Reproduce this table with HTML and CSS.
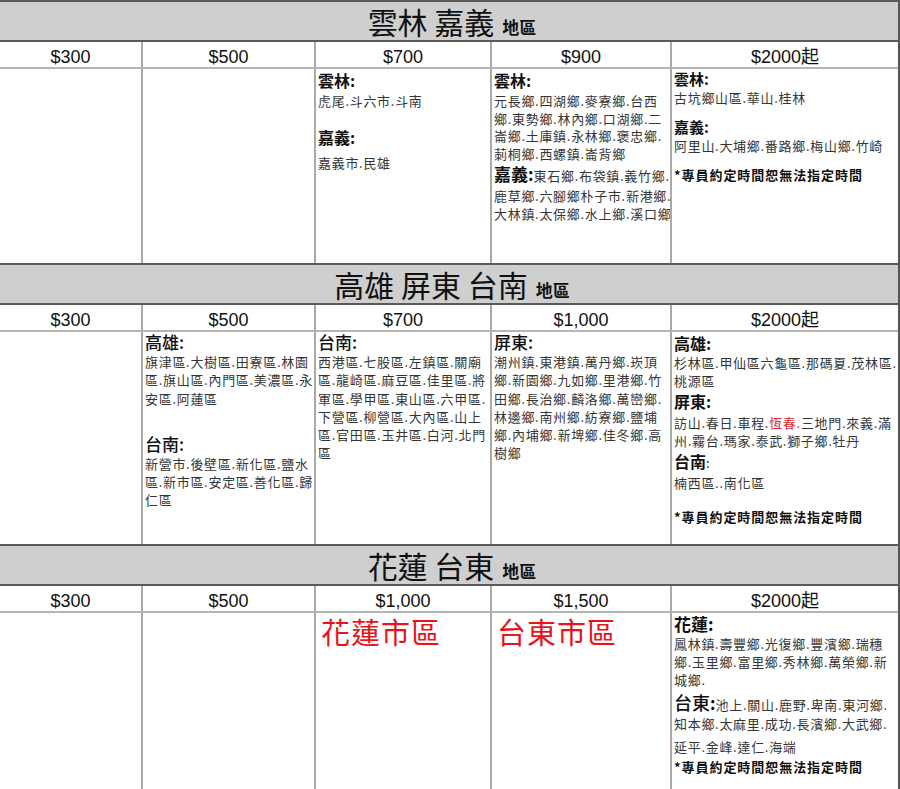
FILE: index.html
```html
<!DOCTYPE html>
<html lang="zh-Hant">
<head>
<meta charset="utf-8">
<title>運費表</title>
<link rel="stylesheet" href="styles.css">
</head>
<body>
<main class="sheet">
  <section class="region r1">
    <h2 class="region-title"><span class="name">雲林 嘉義</span><span class="suffix">地區</span></h2>
    <div class="row prices">
      <div class="c">$300</div><div class="c">$500</div><div class="c">$700</div><div class="c">$900</div><div class="c">$2000起</div>
    </div>
    <div class="row body">
      <div class="c"></div>
      <div class="c"></div>
      <div class="c r1c3">
        <div class="h">雲林:</div>
        <div class="t">虎尾.斗六市.斗南</div>
        <div class="h">嘉義:</div>
        <div class="t">嘉義市.民雄</div>
      </div>
      <div class="c r1c4">
        <div class="h">雲林:</div>
        <div class="t">元長鄉.四湖鄉.麥寮鄉.台西<br>鄉.東勢鄉.林內鄉.口湖鄉.二<br>崙鄉.土庫鎮.永林鄉.褒忠鄉.<br>莿桐鄉.西螺鎮.崙背鄉</div>
        <div class="t lead"><span class="ih">嘉義:</span>東石鄉.布袋鎮.義竹鄉.</div>
        <div class="t">鹿草鄉.六腳鄉朴子市.新港鄉.<br>大林鎮.太保鄉.水上鄉.溪口鄉</div>
      </div>
      <div class="c r1c5">
        <div class="h">雲林:</div>
        <div class="t">古坑鄉山區.華山.桂林</div>
        <div class="h">嘉義:</div>
        <div class="t">阿里山.大埔鄉.番路鄉.梅山鄉.竹崎</div>
        <div class="note">*專員約定時間恕無法指定時間</div>
      </div>
    </div>
  </section>

  <section class="region r2">
    <h2 class="region-title"><span class="name">高雄 屏東 台南</span><span class="suffix">地區</span></h2>
    <div class="row prices">
      <div class="c">$300</div><div class="c">$500</div><div class="c">$700</div><div class="c">$1,000</div><div class="c">$2000起</div>
    </div>
    <div class="row body">
      <div class="c"></div>
      <div class="c r2c2">
        <div class="h">高雄:</div>
        <div class="t">旗津區.大樹區.田寮區.林園<br>區.旗山區.內門區.美濃區.永<br>安區.阿蓮區</div>
        <div class="h">台南:</div>
        <div class="t">新營市.後壁區.新化區.鹽水<br>區.新市區.安定區.善化區.歸<br>仁區</div>
      </div>
      <div class="c r2c3">
        <div class="h">台南:</div>
        <div class="t">西港區.七股區.左鎮區.關廟<br>區.龍崎區.麻豆區.佳里區.將<br>軍區.學甲區.東山區.六甲區.<br>下營區.柳營區.大內區.山上<br>區.官田區.玉井區.白河.北門<br>區</div>
      </div>
      <div class="c r2c3">
        <div class="h">屏東:</div>
        <div class="t">潮州鎮.東港鎮.萬丹鄉.崁頂<br>鄉.新園鄉.九如鄉.里港鄉.竹<br>田鄉.長治鄉.麟洛鄉.萬巒鄉.<br>林邊鄉.南州鄉.紡寮鄉.鹽埔<br>鄉.內埔鄉.新埤鄉.佳冬鄉.高<br>樹鄉</div>
      </div>
      <div class="c r2c5">
        <div class="h">高雄:</div>
        <div class="t">杉林區.甲仙區六龜區.那碼夏.茂林區.<br>桃源區</div>
        <div class="h">屏東:</div>
        <div class="t">訪山.春日.車程.<span class="red">恆春.</span>三地門.來義.滿<br>州.霧台.瑪家.泰武.獅子鄉.牡丹</div>
        <div class="h">台南<span class="colon">:</span></div>
        <div class="t">楠西區..南化區</div>
        <div class="note">*專員約定時間恕無法指定時間</div>
      </div>
    </div>
  </section>

  <section class="region r3">
    <h2 class="region-title"><span class="name">花蓮 台東</span><span class="suffix">地區</span></h2>
    <div class="row prices">
      <div class="c">$300</div><div class="c">$500</div><div class="c">$1,000</div><div class="c">$1,500</div><div class="c">$2000起</div>
    </div>
    <div class="row body">
      <div class="c"></div>
      <div class="c"></div>
      <div class="c"><div class="city">花蓮市區</div></div>
      <div class="c"><div class="city">台東市區</div></div>
      <div class="c r3c5">
        <div class="h">花蓮:</div>
        <div class="t">鳳林鎮.壽豐鄉.光復鄉.豐濱鄉.瑞穗<br>鄉.玉里鄉.富里鄉.秀林鄉.萬榮鄉.新<br>城鄉.</div>
        <div class="t lead"><span class="ih big">台東</span><span class="ih">:</span>池上.關山.鹿野.卑南.東河鄉.</div>
        <div class="t">知本鄉.太麻里.成功.長濱鄉.大武鄉.</div>
        <div class="t late">延平.金峰.達仁.海端</div>
        <div class="note">*專員約定時間恕無法指定時間</div>
      </div>
    </div>
  </section>
</main>
</body>
</html>
```

FILE: styles.css
```css
* {
  box-sizing: border-box;
  margin: 0;
  padding: 0;
}

body {
  margin: 0;
  background: #ffffff;
  font-family: "Noto Sans CJK TC", "Noto Sans CJK SC", sans-serif;
  color: #2a2a2a;
}

.sheet {
  width: 900px;
  border-right: 2px solid #555555;
}

/* Region title band */
.region-title {
  height: 42px;
  border-top: 2px solid #5a5a5a;
  border-bottom: 2px solid #5a5a5a;
  background: #cfcfcf;
  display: flex;
  justify-content: center;
  align-items: baseline;
  padding-left: 6px;
  font-weight: 400;
  color: #111111;
}

.region-title .name {
  font-size: 30px;
  line-height: 38px;
  font-weight: 400;
}

.region-title .suffix {
  font-size: 17px;
  font-weight: 700;
  margin-left: 8px;
}

/* Grid rows */
.row {
  display: grid;
  grid-template-columns: 141px 173px 176px 180px 228px;
}

.row .c + .c {
  border-left: 2px solid #a9a9a9;
}

.prices {
  border-bottom: 2px solid #b5b5b5;
}

.prices .c {
  height: 25px;
  padding-top: 6px;
  line-height: 19px;
  text-align: center;
  font-family: "Liberation Sans", "Noto Sans CJK TC", sans-serif;
  font-size: 18px;
  color: #111111;
}

.body .c {
  padding: 0 2px;
  min-width: 0;
}

.r1 .body { min-height: 194px; }
.r2 .body { min-height: 212px; }
.r3 .body { min-height: 176px; }

/* text pieces */
.h {
  font-size: 16px;
  font-weight: 700;
  line-height: 20px;
  color: #111111;
}

.t {
  font-size: 13px;
  line-height: 18px;
  letter-spacing: 0.7px;
  white-space: nowrap;
  color: #363636;
}

.ih {
  font-size: 17px;
  font-weight: 700;
  color: #111111;
  letter-spacing: 0;
}

.note {
  font-size: 13px;
  font-weight: 700;
  line-height: 18px;
  letter-spacing: 0.95px;
  white-space: nowrap;
  color: #111111;
}

.red {
  color: #e0262b;
}

.city {
  font-size: 29px;
  font-weight: 400;
  line-height: 30px;
  letter-spacing: 1px;
  padding: 3px 0 0 3px;
  color: #e8141b;
  white-space: nowrap;
}

/* Row 1, $700 */
.r1c3 .h:first-child { margin-top: 1px; }
.r1c3 .h + .t { margin-top: 2px; }
.r1c3 .t + .h { margin-top: 17px; }
.r1c3 .h:nth-child(3) + .t { margin-top: 7px; }

/* Row 1, $900 */
.r1c4 .h { margin-top: 1px; }
.r1c4 .t { line-height: 17.7px; }
.r1c4 .h + .t { margin-top: 2px; }
.r1c4 .t.lead { line-height: 22px; }

/* Row 1, $2000 */
.r1c5 .h {
  font-size: 15px;
  line-height: 19px;
}
.r1c5 .h + .t { margin-top: 1px; }
.r1c5 .t + .h { margin-top: 10px; }
.r1c5 .note { margin-top: 11px; }

/* Row 2 */
.r2 .h {
  font-size: 17px;
  font-weight: 500;
}
.r2c2 .t,
.r2c3 .t {
  line-height: 18.3px;
  margin-top: 1px;
}
.r2c2 .t + .h { margin-top: 26px; }

.r2c5 .h {
  font-weight: 700;
  font-size: 16px;
  margin-top: 1px;
}
.r2c5 .t { margin-top: 1px; }
.r2c5 .h:nth-child(3) + .t { margin-top: 3px; }
.r2c5 .colon { font-weight: 400; font-size: 13px; }
.r2c5 .note { margin-top: 16px; }

/* Row 3, $2000 */
.r3c5 .h {
  font-size: 17px;
  margin-top: 1px;
}
.r3c5 .h + .t { margin-top: 1px; }
.r3c5 .t.lead {
  line-height: 22px;
  margin-top: 2px;
}
.r3c5 .t.lead + .t { line-height: 16px; }
.r3c5 .ih.big {
  font-size: 18px;
  font-weight: 500;
}
.r3c5 .t.late { margin-top: 6px; }
.r3c5 .note { margin-top: 2px; }
```
